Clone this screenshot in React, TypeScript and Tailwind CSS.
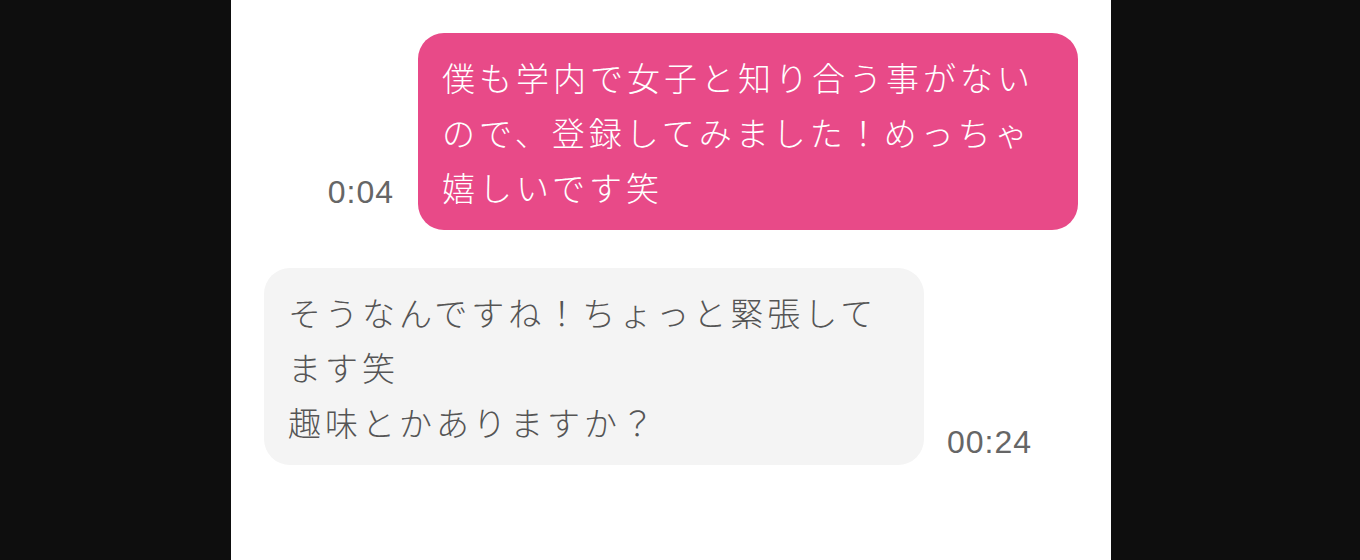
const jp = { fontFamily: '"Noto Sans CJK JP", "Noto Sans", sans-serif' };
const num = { fontFamily: '"Liberation Sans", Arial, sans-serif' };

type Msg = { id: string; mine: boolean; text: string; time: string };

const messages: Msg[] = [
  {
    id: 'm1',
    mine: true,
    text: '僕も学内で女子と知り合う事がないので、登録してみました！めっちゃ嬉しいです笑',
    time: '0:04',
  },
  {
    id: 'm2',
    mine: false,
    text: 'そうなんですね！ちょっと緊張してます笑\n趣味とかありますか？',
    time: '00:24',
  },
];

function Bubble({ m }: { m: Msg }) {
  return (
    <div
      style={jp}
      className={
        m.mine
          ? 'w-[660px] rounded-[26px] bg-[#e84a88] pl-6 pr-5 pt-[17px] pb-[15px] text-[33px] font-light leading-[55px] tracking-[4px] text-white whitespace-pre-wrap'
          : 'w-[660px] rounded-[26px] bg-[#f4f4f4] pl-6 pr-5 pt-[17px] pb-[15px] text-[33px] font-light leading-[55px] tracking-[4px] text-[#555555] whitespace-pre-wrap'
      }
    >
      {m.text}
    </div>
  );
}

export default function App() {
  return (
    <div className="flex h-[560px] w-full bg-[#0e0e0e]">
      <div className="ml-[231px] flex h-[560px] w-[880px] flex-col gap-[38px] bg-white px-[33px] pt-[33px]">
        {messages.map((m) =>
          m.mine ? (
            <div key={m.id} className="flex items-end justify-end gap-6">
              <span style={num} className="mb-[22px] text-[32px] leading-[32px] tracking-[1px] text-[#666666]">
                {m.time}
              </span>
              <Bubble m={m} />
            </div>
          ) : (
            <div key={m.id} className="flex items-end gap-[23px]">
              <Bubble m={m} />
              <span style={num} className="mb-[7px] text-[32px] leading-[32px] tracking-[1px] text-[#666666]">
                {m.time}
              </span>
            </div>
          ),
        )}
      </div>
    </div>
  );
}
